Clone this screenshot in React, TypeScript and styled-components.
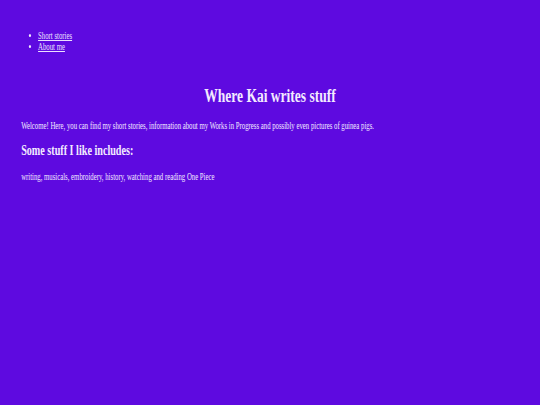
import styled, { createGlobalStyle } from "styled-components";

const SQUEEZE = 0.705;

const GlobalStyle = createGlobalStyle`
  html, body {
    margin: 0;
    padding: 0;
    background-color: #5e0ae0; /* violet */
    overflow: hidden;
  }
`;

// the whole page is drawn narrow, like a squeezed Times page
const Squeeze = styled.div`
  width: ${540 / SQUEEZE}px;
  height: 405px;
  transform: scaleX(${SQUEEZE});
  transform-origin: left top;
  font-family: "Liberation Serif", "Times New Roman", serif;
  font-size: 9.6px;
  color: #f3eaff;
`;

const Nav = styled.ul`
  margin: 0;
  padding: 30px 0 0 54px;
  list-style: disc;
`;

const NavItem = styled.li`
  line-height: 11px;
`;

const NavLink = styled.a`
  color: #ece0ff;
  text-decoration: underline;
`;

const Main = styled.main`
  padding: 0 0 0 30px;
`;

const Title = styled.h1`
  margin: 33px 30px 0 0;
  font-size: 19.2px;
  font-weight: bold;
  line-height: 22px;
  text-align: center;
`;

const Text = styled.p<{ $gap: number }>`
  margin: ${(p) => p.$gap}px 0 0;
  line-height: 11px;
`;

const SubTitle = styled.h2`
  margin: 11px 0 0;
  font-size: 14.4px;
  font-weight: bold;
  line-height: 17px;
`;

export default function App() {
  return (
    <>
      <GlobalStyle />
      <Squeeze>
        <Nav>
          <NavItem>
            <NavLink href="#">Short stories</NavLink>
          </NavItem>
          <NavItem>
            <NavLink href="#">About me</NavLink>
          </NavItem>
        </Nav>
        <Main>
          <Title>Where Kai writes stuff</Title>
          <Text $gap={13}>
            Welcome! Here, you can find my short stories, information about my
            Works in Progress and possibly even pictures of guinea pigs.
          </Text>
          <SubTitle>Some stuff I like includes:</SubTitle>
          <Text $gap={12}>
            writing, musicals, embroidery, history, watching and reading One
            Piece
          </Text>
        </Main>
      </Squeeze>
    </>
  );
}
